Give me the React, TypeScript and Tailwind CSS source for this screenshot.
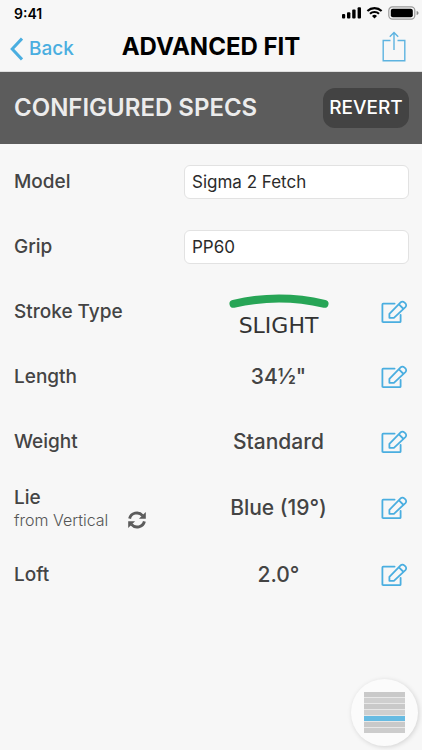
import { useState } from 'react';
import type { ReactNode } from 'react';

type Spec = {
    id: string;
    label: string;
    value: string;
};

const SPECS_BEFORE_LIE: Spec[] = [
    { id: 'length', label: 'Length', value: '34½"' },
    { id: 'weight', label: 'Weight', value: 'Standard' },
];

const BARS = [
    'bg-[#c9c9c9]',
    'bg-[#cfcfcf]',
    'bg-[#c9c9c9]',
    'bg-[#cfcfcf]',
    'bg-[#67bbe2]',
    'bg-[#c9c9c9]',
    'bg-[#cccccc]',
];

const DEFAULTS = { model: 'Sigma 2 Fetch', grip: 'PP60' };

function StatusIcons() {
    return (
        <svg viewBox="0 0 78 14" className="h-3.5 w-[78px]" aria-hidden="true">
            <g fill="#000">
                <rect x="0" y="8" width="3.2" height="4.5" rx="1" />
                <rect x="5" y="6.2" width="3.4" height="6.3" rx="1" />
                <rect x="10.2" y="3.6" width="3.4" height="8.9" rx="1" />
                <rect x="15.6" y="1.2" width="3.4" height="11.3" rx="1" />
            </g>
            <g fill="none" stroke="#000" strokeWidth="2.1">
                <path d="M25.4 4.9a10.4 10.4 0 0 1 14.2 0" />
                <path d="M28 7.8a6.6 6.6 0 0 1 9 0" />
            </g>
            <path d="M32.5 12.6l-2.5-2.7a3.8 3.8 0 0 1 5 0z" fill="#000" />
            <rect x="46.8" y="0.9" width="26" height="12.2" rx="3.6" fill="none" stroke="#9b9b9b" strokeWidth="1.2" />
            <rect x="48.8" y="2.7" width="22" height="8.6" rx="2" fill="#000" />
            <path d="M74.6 5v4c1.2-.4 1.9-1.1 1.9-2s-.7-1.6-1.9-2z" fill="#8a8a8a" />
        </svg>
    );
}

function EditIcon() {
    return (
        <svg viewBox="0 0 28 24" className="h-6 w-7" fill="none" stroke="#4aaee0" strokeWidth="1.8" strokeLinejoin="round" strokeLinecap="round" aria-hidden="true">
            <path d="M13.6 3.6H2.2a.8.8 0 0 0-.8.8v17a.8.8 0 0 0 .8.8h16.6a.8.8 0 0 0 .8-.8v-6.6" />
            <path d="M8.4 17.8v-4L19.6 2.4a2.6 2.6 0 0 1 3.7 0l1.1 1a2.6 2.6 0 0 1 0 3.7L12.9 17.8z" />
            <path d="M18.2 4.6l3.9 3.9" />
        </svg>
    );
}

function RefreshIcon() {
    return (
        <svg viewBox="0 0 18 18" className="size-[18px]" aria-hidden="true">
            <g fill="none" stroke="#5c5c5c" strokeWidth="2.9">
                <path d="M1.6 7.6A7.4 7 0 0 1 14.6 4.6" />
                <path d="M16.4 10.4A7.4 7 0 0 1 3.4 13.4" />
            </g>
            <path d="M17.8 1v6.8h-6.9z" fill="#5c5c5c" />
            <path d="M.2 17v-6.8h6.9z" fill="#5c5c5c" />
        </svg>
    );
}

function SlightStroke() {
    return (
        <div className="flex flex-col items-center gap-1 pt-2">
            <svg viewBox="0 0 100 16" className="h-4 w-[100px]" fill="none" aria-hidden="true">
                <path d="M4.5 9.8Q50 -.8 95.5 9.8" stroke="#27a556" strokeWidth="8" strokeLinecap="round" />
            </svg>
            <span className="font-['DejaVu_Sans',sans-serif] text-[22px] leading-6 font-normal text-[#333]">SLIGHT</span>
        </div>
    );
}

function SpecRow({ label, children, onEdit }: { label: ReactNode; children: ReactNode; onEdit: string }) {
    return (
        <div className="flex min-h-[65px] items-center">
            <div className="w-[170px] shrink-0 text-[19px] leading-6 font-medium">{label}</div>
            <div className="flex flex-1 justify-center text-[21px] leading-6 font-medium">{children}</div>
            <button type="button" aria-label={onEdit} className="ml-2 shrink-0">
                <EditIcon />
            </button>
        </div>
    );
}

function FieldRow({ id, label, value, onChange }: { id: string; label: string; value: string; onChange: (v: string) => void }) {
    return (
        <div className="flex min-h-[65px] items-center">
            <label htmlFor={id} className="w-[170px] shrink-0 text-[19px] leading-6 font-medium">{label}</label>
            <input
                id={id}
                type="text"
                value={value}
                onChange={e => onChange(e.target.value)}
                className="h-[34px] min-w-0 flex-1 rounded-md border border-[#e2e2e2] bg-white px-[7px] text-[17px] text-[#2b2b2b]"
            />
        </div>
    );
}

export default function App() {
    const [specs, setSpecs] = useState(DEFAULTS);

    return (
        <div className="min-h-screen bg-[#f7f7f7] font-[Inter,sans-serif] text-[#444]">
            <header className="border-b border-[#dedede] text-black">
                <div className="flex h-[26px] items-center justify-between pl-3.5 pr-0.5">
                    <span className="text-[14px] font-semibold">9:41</span>
                    <StatusIcons />
                </div>
                <div className="grid h-[45px] grid-cols-[80px_1fr_80px] items-center pb-1">
                    <button type="button" className="flex items-center gap-1.5 pt-1 pl-2.5 text-[19px] leading-6 font-medium text-[#4aaee0]">
                        <svg viewBox="0 0 13 24" className="h-6 w-[13px] shrink-0" fill="none" stroke="currentColor" strokeWidth="3" aria-hidden="true">
                            <path d="M12 1.5L2.2 12 12 22.5" />
                        </svg>
                        Back
                    </button>
                    <h1 className="text-center text-[24px] leading-7 font-bold whitespace-nowrap">ADVANCED FIT</h1>
                    <button type="button" aria-label="Share" className="mr-4 justify-self-end">
                        <svg viewBox="0 0 24 31" className="h-[31px] w-6" fill="none" stroke="#5db3e0" strokeWidth="1.4" aria-hidden="true">
                            <path d="M8.5 9.5H1.2v20.3h21.6V9.5h-7.3" />
                            <path d="M12 19V1.5M7.8 5.8L12 1.5l4.2 4.3" />
                        </svg>
                    </button>
                </div>
            </header>

            <div className="flex h-[72px] items-center justify-between bg-[#5c5c5c] pl-3.5 pr-[13px]">
                <h2 className="text-[24px] leading-7 font-semibold text-[#ececec]">CONFIGURED SPECS</h2>
                <button
                    type="button"
                    onClick={() => setSpecs(DEFAULTS)}
                    className="h-10 w-[86px] rounded-xl bg-[#434343] text-[19px] font-medium text-white"
                >
                    REVERT
                </button>
            </div>

            <main className="pt-[5px] pr-[13px] pb-20 pl-3.5">
                <FieldRow id="model" label="Model" value={specs.model} onChange={model => setSpecs(s => ({ ...s, model }))} />
                <FieldRow id="grip" label="Grip" value={specs.grip} onChange={grip => setSpecs(s => ({ ...s, grip }))} />

                <SpecRow label="Stroke Type" onEdit="Edit stroke type">
                    <SlightStroke />
                </SpecRow>

                {SPECS_BEFORE_LIE.map(spec => (
                    <SpecRow key={spec.id} label={spec.label} onEdit={`Edit ${spec.id}`}>
                        {spec.value}
                    </SpecRow>
                ))}

                <SpecRow
                    onEdit="Edit lie"
                    label={
                        <div className="py-3">
                            <div>Lie</div>
                            <div className="flex items-center gap-5 text-[16px] leading-5 font-light text-[#555]">
                                from Vertical
                                <button type="button" aria-label="Change lie reference">
                                    <RefreshIcon />
                                </button>
                            </div>
                        </div>
                    }
                >
                    Blue (19°)
                </SpecRow>

                <SpecRow label="Loft" onEdit="Edit loft">2.0°</SpecRow>
            </main>

            {/* Floating spec list button */}
            <button
                type="button"
                aria-label="Show all specs"
                className="fixed right-1 bottom-1 flex size-[67px] items-center justify-center rounded-full bg-[#fbfbfb] shadow-[1px_1px_5px_rgba(0,0,0,0.15)]"
            >
                <span className="flex w-[41px] flex-col gap-px bg-[#e8e8e8]">
                    {BARS.map((color, i) => (
                        <span key={i} className={`h-[5px] ${color}`} />
                    ))}
                </span>
            </button>
        </div>
    );
}
